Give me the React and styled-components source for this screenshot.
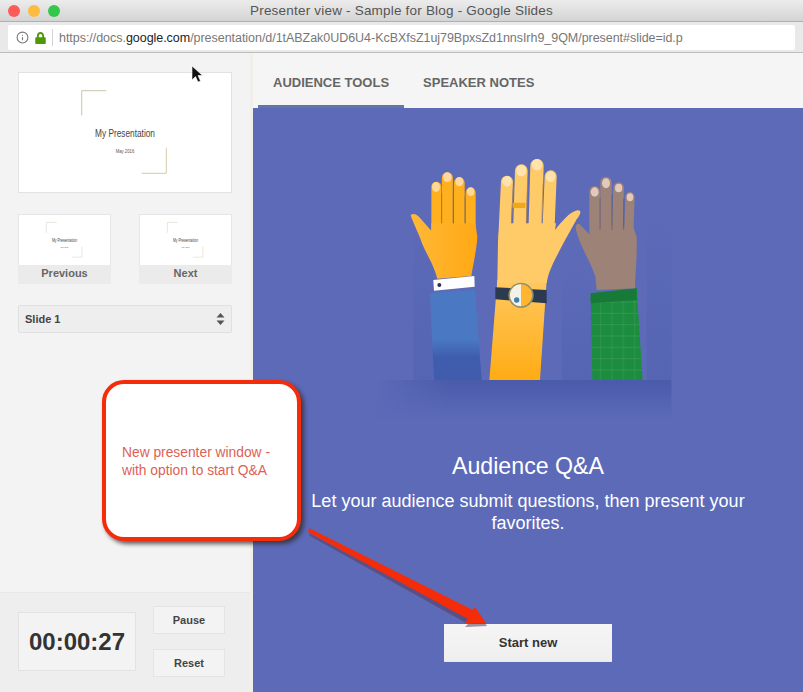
import React from "react";
import styled, { createGlobalStyle } from "styled-components";
import { FiInfo } from "react-icons/fi";
import { FaLock } from "react-icons/fa";

const GlobalStyle = createGlobalStyle`
html, body {
  margin: 0;
  padding: 0;
  overflow: hidden;
  background: #f3f3f3;
}
* { box-sizing: border-box; }
`;

const Window = styled.div`
position: relative;
width: 803px;
height: 692px;
display: flex;
flex-direction: column;
overflow: hidden;
font-family: "Liberation Sans", Arial, sans-serif;
`;
const TitleBar = styled.div`
position: relative;
height: 22px;
flex: none;
display: flex;
align-items: center;
justify-content: center;
background: linear-gradient(#ececec, #d4d4d4);
border-bottom: 1px solid #b0b0b0;
`;
const Lights = styled.div`
position: absolute;
left: 8px;
top: 5px;
display: flex;
gap: 8px;
`;
const Light = styled.span`
width: 12px;
height: 12px;
border-radius: 50%;
background: ${p => p.$color};
`;
const Title = styled.div`
font-size: 13.5px;
letter-spacing: 0.2px;
color: #555;
`;
const UrlRow = styled.div`
height: 31px;
flex: none;
padding: 3px 8px 2px;
background: #e9e9e9;
border-bottom: 1px solid #bdbdbd;
`;
const UrlBox = styled.div`
height: 25px;
display: flex;
align-items: center;
padding-left: 8px;
background: #fff;
border-radius: 2px;
`;
const InfoIcon = styled(FiInfo)`
width: 13px;
height: 13px;
color: #777;
flex: none;
`;
const LockIcon = styled(FaLock)`
width: 11px;
height: 12px;
margin-left: 6px;
color: #4d9a06;
flex: none;
`;
const UrlDivider = styled.span`
width: 1px;
height: 17px;
margin: 0 6px;
background: #d4d4d4;
flex: none;
`;
const UrlText = styled.div`
font-size: 12.5px;
letter-spacing: -0.04px;
color: #777;
white-space: nowrap;
b {
  font-weight: normal;
  color: #222;
}
`;
const Body = styled.div`
flex: 1;
display: flex;
min-height: 0;
`;
const Sidebar = styled.aside`
width: 253px;
flex: none;
display: flex;
flex-direction: column;
background: #f3f3f3;
border-right: 3px solid #f0efe9;
`;
const SideTop = styled.div`
flex: 1;
display: flex;
flex-direction: column;
padding: 19px 18px 0;
`;
const MainSlide = styled.div`
width: 214px;
height: 121px;
background: #fff;
border: 1px solid #e2e2e2;
`;
const Thumbs = styled.div`
display: flex;
justify-content: space-between;
margin-top: 21px;
`;
const Thumb = styled.div`
width: 93px;
display: flex;
flex-direction: column;
`;
const ThumbSlide = styled.div`
height: 51px;
background: #fff;
border: 1px solid #e6e6e6;
border-bottom: none;
`;
const ThumbLabel = styled.div`
height: 19px;
text-align: center;
line-height: 16px;
font-size: 11px;
font-weight: bold;
color: #666;
background: #ebebeb;
`;
const SlideArt = styled.svg`
display: block;
width: 100%;
height: 100%;
`;
const SlideSelect = styled.div`
height: 28px;
margin-top: 21px;
padding: 0 6px;
display: flex;
align-items: center;
justify-content: space-between;
font-size: 11px;
font-weight: bold;
color: #444;
background: #eee;
border: 1px solid #e0e0e0;
border-radius: 2px;
`;
const TimerPanel = styled.div`
height: 100px;
flex: none;
display: flex;
align-items: center;
gap: 17px;
padding: 0 18px 2px;
background: #eeeeee;
border-top: 1px solid #e8e8e8;
`;
const TimerBox = styled.div`
width: 118px;
height: 59px;
display: flex;
align-items: center;
justify-content: center;
font-size: 24px;
font-weight: bold;
color: #333;
background: #f3f3f3;
border: 1px solid #e2e2e2;
`;
const TimerButtons = styled.div`
display: flex;
flex-direction: column;
gap: 15px;
`;
const SmallButton = styled.div`
width: 72px;
height: 28px;
display: flex;
align-items: center;
justify-content: center;
font-size: 11px;
font-weight: bold;
color: #444;
background: #f3f3f3;
border: 1px solid #e4e4e4;
`;
const Main = styled.main`
flex: 1;
display: flex;
flex-direction: column;
min-width: 0;
`;
const Tabs = styled.nav`
height: 55px;
flex: none;
display: flex;
gap: 4px;
padding-left: 5px;
background: #f5f5f5;
`;
const Tab = styled.div`
height: 55px;
padding: 22px 15px 0;
font-size: 13px;
font-weight: bold;
color: #666;
border-bottom: 3px solid ${p => (p.$active ? "#5f78a8" : "transparent")};
`;
const Panel = styled.section`
flex: 1;
display: flex;
flex-direction: column;
align-items: center;
background: #5c6ab8;
color: #fff;
`;
const Illustration = styled.svg`
width: 320px;
height: 290px;
margin: 32px 16px 0 0;
flex: none;
`;
const Heading = styled.h2`
margin: 21px 0 0;
font-size: 23.2px;
line-height: 30px;
font-weight: normal;
`;
const Lead = styled.p`
width: 470px;
margin: 9px 0 0;
font-size: 18px;
line-height: 22px;
text-align: center;
`;
const StartButton = styled.div`
width: 168px;
height: 38px;
margin-top: 90px;
display: flex;
align-items: center;
justify-content: center;
font-size: 13px;
font-weight: bold;
color: #333;
background: linear-gradient(#f5f5f5, #efefef);
border-bottom: 1px solid #dfe8f5;
`;
const Callout = styled.div`
position: absolute;
left: 102px;
top: 380px;
width: 199px;
height: 161px;
padding: 60px 0 0 16px;
font-size: 13.8px;
line-height: 18px;
color: #dd6155;
background: #fff;
border: 4px solid #f42c0a;
border-radius: 22px;
box-shadow: 3px 3px 4px rgba(50, 40, 40, 0.75);
`;
const ArrowLayer = styled.svg`
position: absolute;
left: 300px;
top: 520px;
width: 200px;
height: 115px;
pointer-events: none;
`;
const Cursor = styled.svg`
position: absolute;
left: 191px;
top: 65px;
width: 12px;
height: 18px;
`;

// title slide drawn at the big size, the thumbnails just scale it down
const SlidePreview = () => (
  <SlideArt viewBox="0 0 214 121">
    <path d="M63 43V18H88" fill="none" stroke="#c9c2ac" strokeWidth="1" />
    <path d="M124 102H149V76" fill="none" stroke="#d6c9a8" strokeWidth="1" />
    <text x="107" y="65" textAnchor="middle" fontFamily="'Liberation Sans', sans-serif" fontSize="11.5" fill="#444" textLength="61" lengthAdjust="spacingAndGlyphs">My Presentation</text>
    <text x="107" y="81" textAnchor="middle" fontFamily="'Liberation Sans', sans-serif" fontSize="6" fill="#555" textLength="19" lengthAdjust="spacingAndGlyphs">May 2016</text>
  </SlideArt>
);

const Hands = () => (
  <Illustration viewBox="0 0 960 870">
    <defs>
      <linearGradient id="ground" x1="0" y1="0" x2="0" y2="1">
        <stop offset="0" stopColor="#4a5bab" />
        <stop offset="1" stopColor="#5c6ab8" />
      </linearGradient>
      <linearGradient id="groundFade" x1="0" y1="0" x2="1" y2="0">
        <stop offset="0" stopColor="#fff" stopOpacity="0" />
        <stop offset="0.25" stopColor="#fff" stopOpacity="1" />
      </linearGradient>
      <mask id="groundMask">
        <rect x="50" y="720" width="885" height="120" fill="url(#groundFade)" />
      </mask>
      <linearGradient id="shade" x1="0" y1="0" x2="0" y2="1">
        <stop offset="0" stopColor="#5c6ab8" />
        <stop offset="1" stopColor="#5565b3" />
      </linearGradient>
      <linearGradient id="leftSkin" x1="0" y1="0" x2="1" y2="0">
        <stop offset="0" stopColor="#ffb838" />
        <stop offset="1" stopColor="#ffa914" />
      </linearGradient>
      <linearGradient id="midSkin" x1="0" y1="0" x2="0" y2="1">
        <stop offset="0" stopColor="#ffc860" />
        <stop offset="1" stopColor="#ffac14" />
      </linearGradient>
      <linearGradient id="jacket" x1="0" y1="0" x2="0" y2="1">
        <stop offset="0" stopColor="#4a78c2" />
        <stop offset="0.55" stopColor="#4a78c2" />
        <stop offset="0.75" stopColor="#3f5cad" />
      </linearGradient>
      <pattern id="plaid" width="34" height="34" patternUnits="userSpaceOnUse">
        <rect width="34" height="34" fill="#1c8c3f" />
        <path d="M8 0V34M0 10H34" stroke="#4ea664" strokeWidth="1.2" />
      </pattern>
    </defs>

    <rect x="160" y="240" width="60" height="480" fill="url(#shade)" />
    <rect x="605" y="380" width="90" height="340" fill="url(#shade)" />
    <rect x="860" y="220" width="75" height="500" fill="url(#shade)" />
    <rect x="50" y="720" width="885" height="120" fill="url(#ground)" mask="url(#groundMask)" />

    {/* left hand */}
    <path d="M210 460L345 450L365 720H222Z" fill="url(#jacket)" />
    <g stroke="#ffb01f" strokeLinecap="round" fill="none">
      <path d="M229 140V280" strokeWidth="30" />
      <path d="M262 113V280" strokeWidth="33" />
      <path d="M298 128V280" strokeWidth="32" />
      <path d="M332 158V290" strokeWidth="30" />
    </g>
    <path d="M152 226C160 218 172 224 182 236L214 272V250H346L352 290C350 330 338 380 334 408L232 416C220 370 200 345 186 310C178 285 160 250 152 226Z" fill="url(#leftSkin)" />
    <path d="M245 160V250M280 150V250M315 170V250" stroke="#a8701c" strokeWidth="2" fill="none" />
    <ellipse cx="228" cy="141" rx="12" ry="15" fill="#ffd99b" />
    <ellipse cx="262" cy="112" rx="13" ry="15" fill="#ffd99b" />
    <ellipse cx="298" cy="125" rx="12" ry="14" fill="#ffd99b" />
    <ellipse cx="332" cy="155" rx="11" ry="13" fill="#ffd99b" />
    <path d="M220 420L343 408L344 440L222 452Z" fill="#fff" />
    <circle cx="238" cy="435" r="6" fill="#2b3350" />

    {/* middle hand */}
    <path d="M412 420H560L540 720H388Z" fill="url(#midSkin)" />
    <g stroke="#ffcb69" strokeLinecap="round" fill="none">
      <path d="M441 125L433 290" strokeWidth="36" />
      <path d="M484 92L478 280" strokeWidth="38" />
      <path d="M531 77L525 280" strokeWidth="40" />
      <path d="M572 109L565 280" strokeWidth="36" />
    </g>
    <path d="M414 300L420 250H588L585 270C605 245 630 215 652 211C668 210 660 225 650 238L610 310C590 350 565 390 560 430H412Z" fill="#ffcb69" />
    <path d="M460 140L454 250M503 110L499 250M549 130L545 250" stroke="#b98a3a" strokeWidth="2" fill="none" />
    <ellipse cx="441" cy="124" rx="14" ry="16" fill="#ffe3ad" />
    <ellipse cx="484" cy="92" rx="15" ry="17" fill="#ffe3ad" />
    <ellipse cx="531" cy="74" rx="16" ry="17" fill="#ffe3ad" />
    <ellipse cx="572" cy="110" rx="14" ry="16" fill="#ffe3ad" />
    <rect x="458" y="188" width="38" height="16" rx="2" fill="#f2a716" />
    <path d="M406 442L560 450V490L406 478Z" fill="#2b3a4e" />
    <circle cx="483" cy="466" r="38" fill="#8f8f72" />
    <circle cx="483" cy="466" r="33" fill="#ffb62e" />
    <path d="M483 433A33 33 0 0 0 483 499Z" fill="#f4f1e6" />
    <circle cx="470" cy="480" r="8" fill="#3d7fb0" />

    {/* right hand */}
    <path d="M692 460L830 445L848 720H697Z" fill="url(#plaid)" />
    <path d="M692 460L830 445V480L692 490Z" fill="#177a38" />
    <g stroke="#9d8277" strokeLinecap="round" fill="none">
      <path d="M704 154V280" strokeWidth="32" />
      <path d="M738 127V280" strokeWidth="34" />
      <path d="M776 143L772 280" strokeWidth="32" />
      <path d="M810 170L806 285" strokeWidth="28" />
    </g>
    <path d="M710 450L706 410C690 360 660 320 648 270C644 250 656 246 664 258L690 285V260H820L830 290C832 340 826 400 825 445Z" fill="#9d8277" />
    <path d="M720 175V270M756 165V270M791 175V270" stroke="#6f5a55" strokeWidth="2" fill="none" />
    <ellipse cx="704" cy="156" rx="12" ry="14" fill="#e3c8bd" />
    <ellipse cx="738" cy="130" rx="12" ry="15" fill="#e3c8bd" />
    <ellipse cx="776" cy="144" rx="11" ry="13" fill="#e3c8bd" />
    <ellipse cx="810" cy="172" rx="10" ry="12" fill="#e3c8bd" />
  </Illustration>
);

export default function App() {
  return (
    <Window>
      <GlobalStyle />
      <TitleBar>
        <Lights>
          <Light $color="#fc5b57" />
          <Light $color="#fdbb40" />
          <Light $color="#34c84a" />
        </Lights>
        <Title>Presenter view - Sample for Blog - Google Slides</Title>
      </TitleBar>
      <UrlRow>
        <UrlBox>
          <InfoIcon />
          <LockIcon />
          <UrlDivider />
          <UrlText>https://docs.<b>google.com</b>/presentation/d/1tABZak0UD6U4-KcBXfsZ1uj79BpxsZd1nnsIrh9_9QM/present#slide=id.p</UrlText>
        </UrlBox>
      </UrlRow>
      <Body>
        <Sidebar>
          <SideTop>
            <MainSlide><SlidePreview /></MainSlide>
            <Thumbs>
              <Thumb>
                <ThumbSlide><SlidePreview /></ThumbSlide>
                <ThumbLabel>Previous</ThumbLabel>
              </Thumb>
              <Thumb>
                <ThumbSlide><SlidePreview /></ThumbSlide>
                <ThumbLabel>Next</ThumbLabel>
              </Thumb>
            </Thumbs>
            <SlideSelect>
              Slide 1
              <svg width="9" height="12" viewBox="0 0 9 12">
                <path d="M4.5 0L8.5 4.5H.5ZM4.5 12L.5 7.5H8.5Z" fill="#555" />
              </svg>
            </SlideSelect>
          </SideTop>
          <TimerPanel>
            <TimerBox>00:00:27</TimerBox>
            <TimerButtons>
              <SmallButton>Pause</SmallButton>
              <SmallButton>Reset</SmallButton>
            </TimerButtons>
          </TimerPanel>
        </Sidebar>
        <Main>
          <Tabs>
            <Tab $active>AUDIENCE TOOLS</Tab>
            <Tab>SPEAKER NOTES</Tab>
          </Tabs>
          <Panel>
            <Hands />
            <Heading>Audience Q&amp;A</Heading>
            <Lead>Let your audience submit questions, then present your favorites.</Lead>
            <StartButton>Start new</StartButton>
          </Panel>
        </Main>
      </Body>
      <Callout>New presenter window -<br />with option to start Q&amp;A</Callout>
      <ArrowLayer viewBox="0 0 200 115">
        <path d="M8 11L171 97L174 88L186 104L164 105L167 102L9 14Z" fill="#5a3a5a" opacity="0.55" transform="translate(1 2)" />
        <path d="M9 8L173 90L175 87L186 103L164 104L168 99L8 12Z" fill="#f42c0a" />
      </ArrowLayer>
      <Cursor viewBox="0 0 12 18">
        <path d="M1 1V15L4.5 11.5L7 17L9.5 16L7 10.5H11.5Z" fill="#111" stroke="#fff" strokeWidth="0.6" />
      </Cursor>
    </Window>
  );
}
